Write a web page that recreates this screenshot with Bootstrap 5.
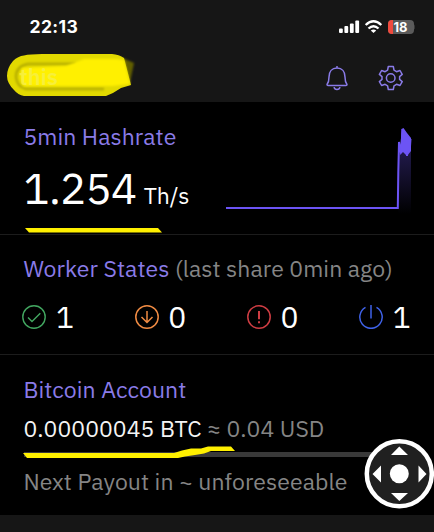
<!DOCTYPE html>
<html lang="en">
<head>
<meta charset="utf-8">
<meta name="viewport" content="width=device-width, initial-scale=1">
<title>Mining dashboard</title>
<link href="https://cdn.jsdelivr.net/npm/bootstrap@5.3.0/dist/css/bootstrap.min.css" rel="stylesheet">
<style>
body{width:434px;height:532px;overflow:hidden;background:#161616;color:#f4f4f4;font-family:"IBM Plex Sans",Roboto,sans-serif;font-size:23px;line-height:30px;letter-spacing:.06px}
svg{display:block;flex:none}
.topbar{height:102px}
.status{height:53px;padding:1px 19px 0 29.5px}
.clock{font-family:Inter,sans-serif;font-weight:700;font-size:17.5px;color:#fff;letter-spacing:.4px}
.tools{height:49px;padding:0 31px 0 6px}
.icons{margin-top:12px;gap:29px}
.panel{background:#000;padding-left:23.4px;padding-right:24px;white-space:nowrap}
.hash{height:133px;padding-top:19px;border-bottom:1px solid #1c1c1c}
.workers{height:120px;padding-top:18px;border-bottom:1px solid #1c1c1c}
.account{height:160px;padding-top:19px}
.accent{color:#8a7be8}
.dim{color:#858585}
.value{font-size:43.5px;line-height:52px;margin-top:11px;color:#fff;letter-spacing:-.6px}
.unit{font-size:23px;margin-left:7px;letter-spacing:-.1px}
.chart{position:absolute;left:226px;top:20px}
.stroke-a{position:absolute;left:24px;top:124px}
.stroke-b{position:absolute;left:22px;top:89px}
.counts{margin-top:16px;margin-left:-1px}
.count{flex:none;font-size:30px;line-height:36px;color:#fff;width:112.3px;gap:9.500px}
.count:last-child{width:auto}
.btc{margin-top:9px}
.bar{height:5px;background:#393939;margin:9px 0 9px 1px}
.pad{position:absolute;left:364px;top:438px}
</style>
</head>
<body class="position-relative">
<header class="topbar">
  <div class="status d-flex align-items-center justify-content-between">
    <span class="clock">22:13</span>
    <svg width="76" height="16" viewBox="340 19 76 16">
      <g fill="#fff"><rect x="340" y="28.500" width="3.800" height="4.500" rx="1"/><rect x="345.400" y="26" width="3.800" height="7" rx="1"/><rect x="350.900" y="23.500" width="3.800" height="9.500" rx="1"/><rect x="356.300" y="20.500" width="3.800" height="12.500" rx="1"/></g>
      <g fill="none" stroke="#fff" stroke-width="2.400"><path d="M366.700 25Q374.500 17.500 382.300 25"/><path d="M369.500 28.500Q374.500 23.800 379.500 28.500"/></g>
      <path d="M371.800 30.500Q374.500 28.300 377.200 30.500L374.500 33z" fill="#fff"/>
      <rect x="389" y="20" width="26" height="14" rx="4" fill="#5b5b5b"/><path d="M394 20h-1a4 4 0 0 0-4 4v6a4 4 0 0 0 4 4h1z" fill="#f04a3e"/><path d="M415.500 24.500q1.500 2.500 0 5z" fill="#5b5b5b"/>
      <text x="401.500" y="31.600" text-anchor="middle" font-family="Inter,sans-serif" font-weight="700" font-size="13" fill="#fff">18</text>
    </svg>
  </div>
  <div class="tools d-flex justify-content-between align-items-start">
    <svg width="130" height="45" viewBox="6 53 130 45">
      <defs><filter id="soft" x="-20%" y="-20%" width="140%" height="140%"><feGaussianBlur stdDeviation="1.300"/></filter><filter id="edge"><feGaussianBlur stdDeviation=".5"/></filter></defs>
      <path d="M118 56L134 63L130 82L112 90z" fill="#625e05" filter="url(#soft)"/>
      <path d="M24 55.500Q30 54 42 54H112Q119 54.500 124 58L131 85L121 88Q114 93 106 96H24Q18 95 14 90Q7 83 7 76Q7 68 13 61Q18 56 24 55.500z" fill="#e2d900" filter="url(#edge)"/>
      <path d="M76 64H28Q16 66 16 77Q17 87 26 89H104" fill="none" stroke="#b5ad00" stroke-width="2.500" filter="url(#soft)"/>
      <path d="M22 68L66 66L84 59H116L124 60L130 84L112 86H24Q18 78 22 68z" fill="#fff000" filter="url(#soft)"/>
      <text x="19" y="85" font-family="IBM Plex Sans,sans-serif" font-weight="600" font-size="22" fill="#f6ef4a" opacity=".8">this</text>
    </svg>
    <div class="icons d-flex">
      <svg width="24" height="26" viewBox="325 65 24 26" fill="none" stroke="#8a7be8" stroke-width="1.500" stroke-linejoin="round"><path d="M337 66V68M327 84.500C329 82 329 81 329 77C329 71.500 332 68 337 68S345 71.500 345 77C345 81 345 82 347 84.500Q347 85.500 346 85.500H328Q327 85.500 327 84.500zM334 87.200Q334.500 89.500 337 89.500T340 87.200"/></svg>
      <svg width="25" height="26" viewBox="378 65 25 26" fill="none" stroke="#8a7be8" stroke-width="1.500" stroke-linejoin="round"><path d="M388.300 66.500H393.300L394 70.200L396.500 71.700L400 70.500L402.200 74.400L399.600 76.600V79.400L402.200 81.600L400 85.500L396.500 84.300L394 85.800L393.300 89.500H388.300L387.600 85.800L385.100 84.300L381.600 85.500L379.400 81.600L382 79.400V76.600L379.400 74.400L381.600 70.500L385.100 71.700L387.600 70.200z"/><circle cx="390.700" cy="78" r="4.300"/></svg>
    </div>
  </div>
</header>
<main>
  <section class="panel hash position-relative">
    <div class="accent">5min Hashrate</div>
    <div class="value">1.254<span class="unit">Th/s</span></div>
    <svg class="chart" width="190" height="100" viewBox="226 122 190 100">
      <defs><linearGradient id="fade" x1="0" y1="0" x2="0" y2="1"><stop offset="0" stop-color="#6f57ff" stop-opacity=".32"/><stop offset="1" stop-color="#6f57ff" stop-opacity="0"/></linearGradient></defs>
      <path d="M398 145H411V214H398z" fill="url(#fade)"/>
      <path d="M226 208H397.800L398.300 172L399 142L401 153L402.600 129L404 151L405.500 133L407 156L408.300 138L409.700 151L410.500 139" fill="none" stroke="#6c54f5" stroke-width="2"/>
      <path d="M401.500 129L403.500 128L407 133L411 138V151L407 156L403 152L400 155z" fill="#6c54f5"/>
    </svg>
    <svg class="stroke-a" width="140" height="7"><path d="M1 2H134L138 6.500H5z" fill="#fff000"/></svg>
  </section>
  <section class="panel workers">
    <div><span class="accent">Worker States</span> <span class="dim">(last share 0min ago)</span></div>
    <div class="counts d-flex">
      <div class="count d-flex align-items-center">
        <svg width="24" height="24" viewBox="0 0 24 24" fill="none" stroke="#42a660" stroke-width="1.400"><circle cx="12" cy="12" r="11.200"/><path d="M6 12.500L10 16.500L18.300 8.300"/></svg><span>1</span></div>
      <div class="count d-flex align-items-center">
        <svg width="24" height="24" viewBox="0 0 24 24" fill="none" stroke="#f08b43" stroke-width="1.500"><circle cx="12" cy="12" r="11.200"/><path d="M12 6V17.500M6.500 12L12 17.500L17.500 12"/></svg><span>0</span></div>
      <div class="count d-flex align-items-center">
        <svg width="24" height="24" viewBox="0 0 24 24" fill="none" stroke="#ce3d43" stroke-width="1.500"><circle cx="12" cy="12" r="11.200"/><path d="M12 6V14.300M12 16.300V18.300" stroke-width="2"/></svg><span>0</span></div>
      <div class="count d-flex align-items-center">
        <svg width="24" height="24" viewBox="0 0 24 24" fill="none" stroke="#3f62e8" stroke-width="1.500"><path d="M6.500 2.400A11.200 11.200 0 1 0 17.500 2.400M12 0V13.500"/></svg><span>1</span></div>
    </div>
  </section>
  <section class="panel account position-relative">
    <div class="accent">Bitcoin Account</div>
    <div class="btc">0.00000045 BTC <span class="dim">≈ 0.04 USD</span></div>
    <div class="bar"></div>
    <div class="dim">Next Payout in ~ unforeseeable</div>
    <svg class="stroke-b" width="216" height="16" viewBox="22 444 216 16"><path d="M23 453H174L182 450.500L191 448.500H201L208 446.500H231L235 451H211L204 453.500L195 455L185 456.500L178 458H27z" fill="#fff000"/></svg>
  </section>
</main>
<svg class="pad" width="70" height="72" viewBox="364 438 70 72"><circle cx="399.300" cy="473.800" r="32.500" fill="#202020" stroke="#fff" stroke-width="4.500"/><g fill="#fff"><circle cx="399.300" cy="473.800" r="9.500"/><path d="M399.300 446.500L408 455H391zM399.300 501L391 493H408zM372.500 474L381 465.500V482.500zM426.500 474L418.500 465.500V482.500z"/></g></svg>
<script src="https://cdn.jsdelivr.net/npm/bootstrap@5.3.0/dist/js/bootstrap.bundle.min.js"></script>
</body>
</html>
